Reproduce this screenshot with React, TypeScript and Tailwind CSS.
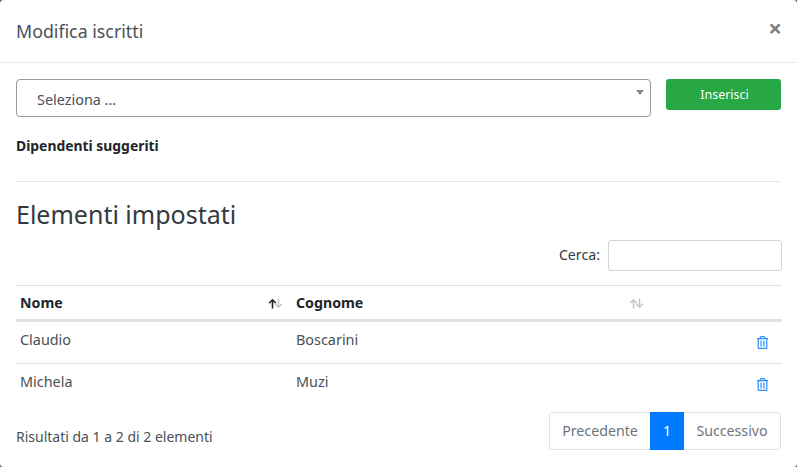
import { FaRegTrashAlt } from "react-icons/fa";

function SortIcon({ active }: { active?: boolean }) {
  return (
    <svg width="15" height="11" viewBox="0 0 15 11" fill="none" strokeWidth="1.6">
      <path d="M4.5 10.5V2M1.2 5.2L4.5 1.8l3.3 3.4" stroke={active ? "#212529" : "#c8c8c8"} />
      <path d="M10.5 .5V9M7.2 5.8l3.3 3.4 3.3-3.4" stroke="#c8c8c8" />
    </svg>
  );
}

export default function App() {
  return (
    <div className="h-[467px] w-[797px] overflow-hidden bg-[#6b6b6b] font-['Noto_Sans',sans-serif] text-[14px] text-[#343a40]">
      <div className="flex h-full flex-col rounded-[4px] bg-white">
        <div className="flex h-[63px] items-center justify-between border-b border-[#e9ecef] pl-4 pr-[15px]">
          <h5 className="text-[17.8px] text-[#495057]">Modifica iscritti</h5>
          <span className="mb-[6px] text-[24px] font-bold leading-none text-[#808080]">×</span>
        </div>

        <div className="flex flex-1 flex-col px-4 pt-4">
          <div className="flex items-start">
            <div className="relative flex h-[38px] w-[635px] items-center rounded-[4px] border border-[#999] pl-5 text-[14.4px] text-[#495057]">
              <span className="mt-[3px]">Seleziona ...</span>
              <span className="absolute right-[6px] top-[10px] h-0 w-0 border-x-4 border-t-[5px] border-x-transparent border-t-[#888]" />
            </div>
            <button className="ml-[15px] h-[31px] w-[115px] rounded-[3px] bg-[#28a745] pl-[2px] pt-[2px] text-[12.5px] text-white">Inserisci</button>
          </div>

          <div className="mt-[19px] h-[20px] text-[13.9px] font-bold leading-[20px] text-[#212529]">Dipendenti suggeriti</div>
          <div className="mt-[25px] border-t border-[#e3e5e8]" />

          <h3 className="mt-[13px] text-[25px] leading-[38px] text-[#343a40]">Elementi impostati</h3>

          <div className="mr-[-1px] mt-[7px] flex h-[32px] items-start justify-end gap-2">
            <span className="mt-[5px] text-[14.2px] leading-[20px]">Cerca:</span>
            <div className="h-[31px] w-[174px] rounded-[3px] border border-[#ced4da]" />
          </div>

          <div className="mt-[13px] w-[766px]">
            <div className="flex h-[37px] items-center border-y border-b-[3px] border-t-[#dee2e6] border-b-[#dee2e6] text-[14.2px] font-bold text-[#212529]">
              <div className="flex w-[280px] items-center justify-between pl-1 pr-[13px]">
                Nome
                <span className="mt-[3px]"><SortIcon active /></span>
              </div>
              <div className="flex w-[348px] items-center justify-between">
                Cognome
                <span className="mt-[3px]"><SortIcon /></span>
              </div>
            </div>
            {[["Claudio", "Boscarini"], ["Michela", "Muzi"]].map(([a, b]) => (
              <div key={a} className="flex h-[42px] items-center border-b border-[#dee2e6] text-[14.4px] text-[#495057] last:border-b-0">
                <div className="mb-[6px] w-[280px] pl-1">{a}</div>
                <div className="mb-[6px] flex-1">{b}</div>
                <FaRegTrashAlt className="mb-[1px] mr-[13px] text-[#2f8fff]" size={13} />
              </div>
            ))}
          </div>

          <div className="mt-[6px] flex w-[765px] items-center justify-between">
            <span className="mt-[11px] text-[#495057]">Risultati da 1 a 2 di 2 elementi</span>
            <div className="flex h-[38px] w-[232px] items-center rounded-[3px] border border-[#dee2e6] text-[14.2px] text-[#6c757d]">
              <span className="w-[100px] text-center">Precedente</span>
              <span className="flex h-[38px] w-[34px] items-center justify-center bg-[#007bff] text-white">1</span>
              <span className="flex-1 text-center">Successivo</span>
            </div>
          </div>
        </div>
      </div>
    </div>
  );
}
